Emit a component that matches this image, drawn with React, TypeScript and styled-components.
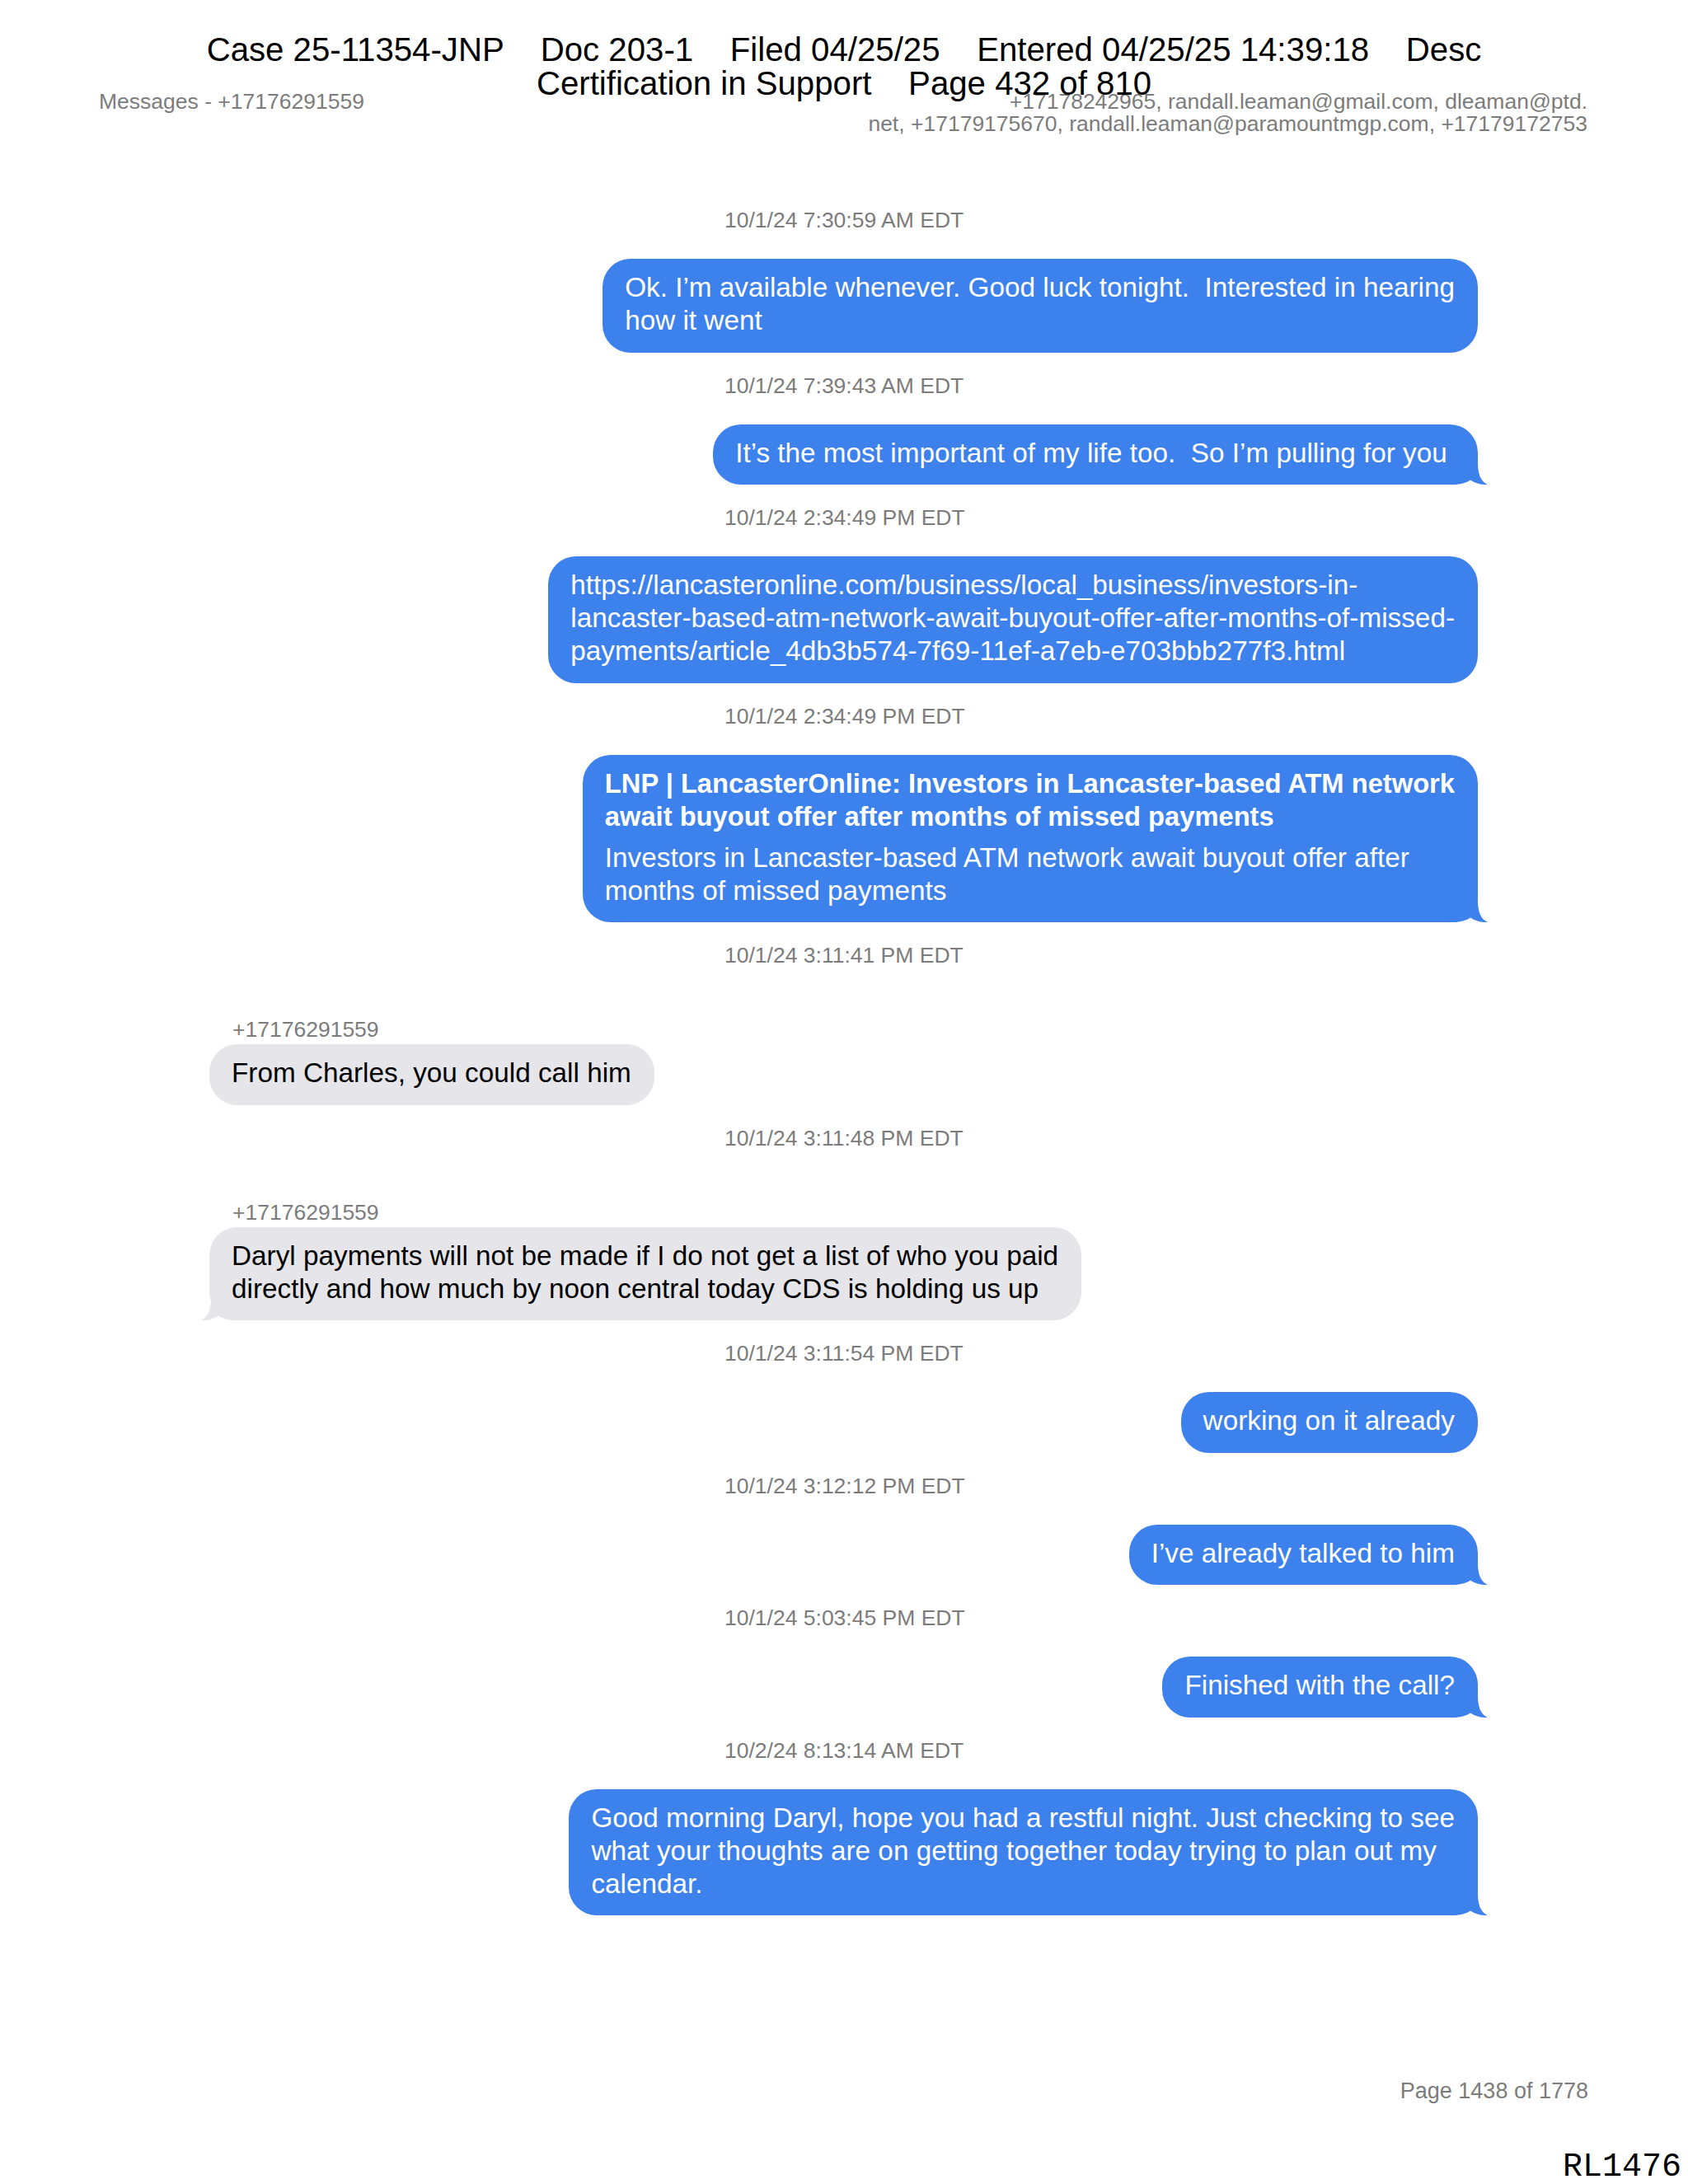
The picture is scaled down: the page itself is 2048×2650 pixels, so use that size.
import { createGlobalStyle, styled } from 'styled-components'

const GlobalStyle = createGlobalStyle`
  html, body {
    margin: 0;
    padding: 0;
    background: #fff;
  }
  body {
    font-family: "Liberation Sans", Arial, sans-serif;
  }
`

type Message = {
  time: string
  from?: string
  lines?: string[]
  title?: string[]
  tail?: boolean
}

const messages: Message[] = [
  {
    time: '10/1/24 7:30:59 AM EDT',
    lines: [
      'Ok. I’m available whenever. Good luck tonight.  Interested in hearing',
      'how it went',
    ],
  },
  {
    time: '10/1/24 7:39:43 AM EDT',
    lines: ['It’s the most important of my life too.  So I’m pulling for you '],
    tail: true,
  },
  {
    time: '10/1/24 2:34:49 PM EDT',
    lines: [
      'https://lancasteronline.com/business/local_business/investors-in-',
      'lancaster-based-atm-network-await-buyout-offer-after-months-of-missed-',
      'payments/article_4db3b574-7f69-11ef-a7eb-e703bbb277f3.html',
    ],
  },
  {
    time: '10/1/24 2:34:49 PM EDT',
    title: [
      'LNP | LancasterOnline: Investors in Lancaster-based ATM network',
      'await buyout offer after months of missed payments',
    ],
    lines: [
      'Investors in Lancaster-based ATM network await buyout offer after',
      'months of missed payments',
    ],
    tail: true,
  },
  {
    time: '10/1/24 3:11:41 PM EDT',
    from: '+17176291559',
    lines: ['From Charles, you could call him'],
  },
  {
    time: '10/1/24 3:11:48 PM EDT',
    from: '+17176291559',
    lines: [
      'Daryl payments will not be made if I do not get a list of who you paid',
      'directly and how much by noon central today CDS is holding us up',
    ],
    tail: true,
  },
  {
    time: '10/1/24 3:11:54 PM EDT',
    lines: ['working on it already'],
  },
  {
    time: '10/1/24 3:12:12 PM EDT',
    lines: ['I’ve already talked to him'],
    tail: true,
  },
  {
    time: '10/1/24 5:03:45 PM EDT',
    lines: ['Finished with the call?'],
    tail: true,
  },
  {
    time: '10/2/24 8:13:14 AM EDT',
    lines: [
      'Good morning Daryl, hope you had a restful night. Just checking to see',
      'what your thoughts are on getting together today trying to plan out my',
      'calendar.',
    ],
    tail: true,
  },
]

const BLUE = '#3d81ec'
const GRAY = '#e5e5ea'

const Tail = ({ incoming }: { incoming: boolean }) => (
  <TailSvg $incoming={incoming} viewBox="0 0 50 34" width="50" height="34">
    <path
      d="M0 0 H38 V8 C38 20 41 30 50 34 C43 34.5 35 32.5 29 28.5 C23 32.5 15 34 6 34 H0 Z"
      fill={incoming ? GRAY : BLUE}
    />
  </TailSvg>
)

const App = () => {
  return (
    <Page>
      <GlobalStyle />
      <CourtStamp>
        {'Case 25-11354-JNP    Doc 203-1    Filed 04/25/25    Entered 04/25/25 14:39:18    Desc\nCertification in Support    Page 432 of 810'}
      </CourtStamp>

      <DocHeader>
        <div>Messages - +17176291559</div>
        <Participants>
          <div>+17178242965, randall.leaman@gmail.com, dleaman@ptd.</div>
          <div>net, +17179175670, randall.leaman@paramountmgp.com, +17179172753</div>
        </Participants>
      </DocHeader>

      <Thread>
        {messages.map((m, i) => {
          const incoming = !!m.from
          return (
            <Entry key={i}>
              <Timestamp>{m.time}</Timestamp>
              {m.from && <Sender>{m.from}</Sender>}
              <Row $incoming={incoming}>
                <Bubble $incoming={incoming}>
                  {m.tail && <Tail incoming={incoming} />}
                  {m.title && (
                    <Title>
                      {m.title.map((t) => (
                        <Line key={t}>{t}</Line>
                      ))}
                    </Title>
                  )}
                  <Body $spaced={!!m.title}>
                    {m.lines?.map((t) => (
                      <Line key={t}>{t}</Line>
                    ))}
                  </Body>
                </Bubble>
              </Row>
            </Entry>
          )
        })}
      </Thread>

      <Footer>
        <PageNumber>Page 1438 of 1778</PageNumber>
        <Bates>RL1476</Bates>
      </Footer>
    </Page>
  )
}

const Page = styled.div`
  position: relative;
  width: 2048px;
  min-height: 2650px;
  box-sizing: border-box;
  padding-top: 110px;
  display: flex;
  flex-direction: column;
`
const CourtStamp = styled.div`
  position: absolute;
  top: 41px;
  left: 0;
  right: 0;
  text-align: center;
  white-space: pre;
  font-size: 40.2px;
  line-height: 40.5px;
  color: #000;
`
const DocHeader = styled.header`
  display: flex;
  justify-content: space-between;
  align-items: flex-start;
  padding: 0 122px 0 120px;
  font-size: 26.5px;
  line-height: 27px;
  color: #7c7c7c;
`
const Participants = styled.div`
  text-align: right;
`
const Thread = styled.main`
  display: flex;
  flex-direction: column;
  padding: 88px 255px 0 254px;
`
const Entry = styled.section`
  display: flex;
  flex-direction: column;
  & + & {
    margin-top: 25px;
  }
`
const Timestamp = styled.div`
  margin-left: 625px;
  font-size: 26.5px;
  line-height: 30px;
  color: #7c7c7c;
`
const Sender = styled.div`
  margin-top: 62px;
  padding-left: 28px;
  font-size: 26.5px;
  line-height: 26px;
  color: #7c7c7c;
`
const Row = styled.div<{ $incoming: boolean }>`
  display: flex;
  justify-content: ${(p) => (p.$incoming ? 'flex-start' : 'flex-end')};
  margin-top: ${(p) => (p.$incoming ? '5px' : '32px')};
`
const Bubble = styled.div<{ $incoming: boolean }>`
  position: relative;
  padding: 15px 28px 18.5px 27px;
  border-radius: 34px;
  background: ${(p) => (p.$incoming ? GRAY : BLUE)};
  color: ${(p) => (p.$incoming ? '#000' : '#fff')};
  font-size: 33.3px;
  line-height: 40px;
`
const Title = styled.div`
  position: relative;
  font-weight: 700;
  font-size: 32.7px;
`
const Body = styled.div<{ $spaced: boolean }>`
  position: relative;
  margin-top: ${(p) => (p.$spaced ? '10px' : '0')};
`
const Line = styled.span`
  display: block;
  white-space: pre;
`
const TailSvg = styled.svg<{ $incoming: boolean }>`
  position: absolute;
  bottom: 0;
  ${(p) =>
    p.$incoming
      ? 'left: -10px; transform: scaleX(-1);'
      : 'right: -12px;'}
`
const Footer = styled.footer`
  margin-top: auto;
  display: flex;
  flex-direction: column;
  align-items: flex-end;
`
const PageNumber = styled.div`
  padding-right: 121px;
  font-size: 27px;
  line-height: 30px;
  color: #7c7c7c;
`
const Bates = styled.div`
  margin-top: 58px;
  padding-right: 8px;
  font-family: "Liberation Mono", "Courier New", monospace;
  font-size: 40px;
  line-height: 40px;
  color: #000;
`

export default App
